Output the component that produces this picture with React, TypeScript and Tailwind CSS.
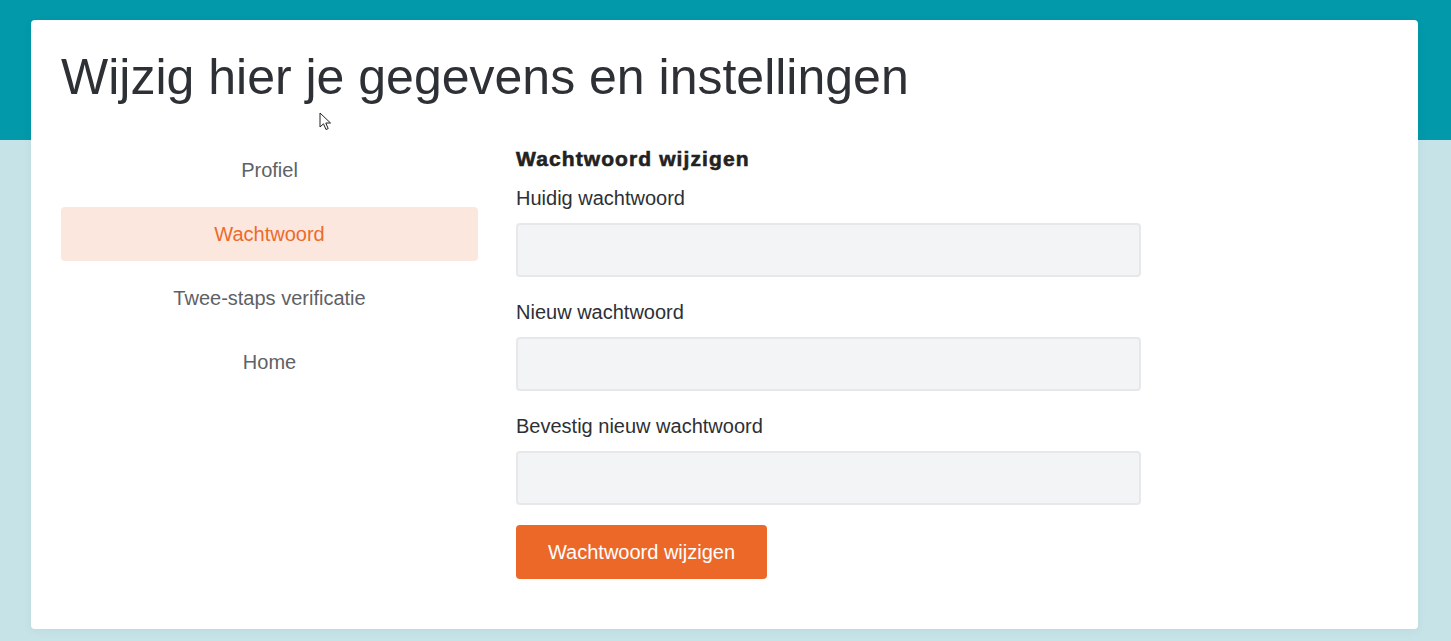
import React from "react";

const navItems = ["Profiel", "Wachtwoord", "Twee-staps verificatie", "Home"];
const fields = ["Huidig wachtwoord", "Nieuw wachtwoord", "Bevestig nieuw wachtwoord"];

function Cursor() {
  return (
    <svg
      className="pointer-events-none absolute left-[319px] top-[112px]"
      width="14"
      height="20"
      viewBox="0 0 14 20"
    >
      <path
        d="M1 1 L1 15 L4.5 11.8 L7 17.5 L9.2 16.6 L6.8 11 L11.5 11 Z"
        fill="#fff"
        stroke="#222"
        strokeWidth="1"
        strokeLinejoin="round"
      />
    </svg>
  );
}

export default function App() {
  const active = "Wachtwoord";

  return (
    <div className="relative h-[641px] w-full overflow-hidden bg-[#c6e4e8] font-['Liberation_Sans',Arial,sans-serif]">
      <div className="h-[140px] bg-[#0299aa]" />
      <div className="absolute left-[31px] right-[33px] top-[20px] h-[609px] rounded-[4px] bg-white px-[30px] pt-[24px] shadow-[0_2px_10px_rgba(0,0,0,0.05)]">
        <h1 className="text-[50px] leading-[66px] text-[#2d3035]">
          Wijzig hier je gegevens en instellingen
        </h1>

        <div className="mt-[33px] flex gap-[38px]">
          <nav className="flex w-[417px] flex-col gap-[10px]">
            {navItems.map((item) => (
              <div
                key={item}
                className={`flex h-[54px] items-center justify-center rounded-[4px] text-[20px] ${
                  item === active
                    ? "bg-[#fce7df] text-[#ec6a2c]"
                    : "text-[#5e6166]"
                }`}
              >
                {item}
              </div>
            ))}
          </nav>

          <form className="flex w-[625px] flex-col">
            <h2 className="mt-[3px] text-[21px] font-bold leading-[26px] tracking-[1.1px] text-[#222] [-webkit-text-stroke:0.6px_#222]">
              Wachtwoord wijzigen
            </h2>
            {fields.map((label) => (
              <div key={label} className="mt-[13px] mb-[9px] flex flex-col">
                <label className="text-[20px] leading-[26px] text-[#2d3035]">
                  {label}
                </label>
                <input
                  type="password"
                  className="mt-[12px] h-[54px] rounded-[4px] border-2 border-[#e6e8eb] bg-[#f3f4f6] px-3 outline-none"
                />
              </div>
            ))}
            <button
              type="button"
              className="mt-[11px] h-[54px] w-[251px] rounded-[4px] bg-[#ec6829] text-[20px] text-white"
            >
              Wachtwoord wijzigen
            </button>
          </form>
        </div>
      </div>
      <Cursor />
    </div>
  );
}
